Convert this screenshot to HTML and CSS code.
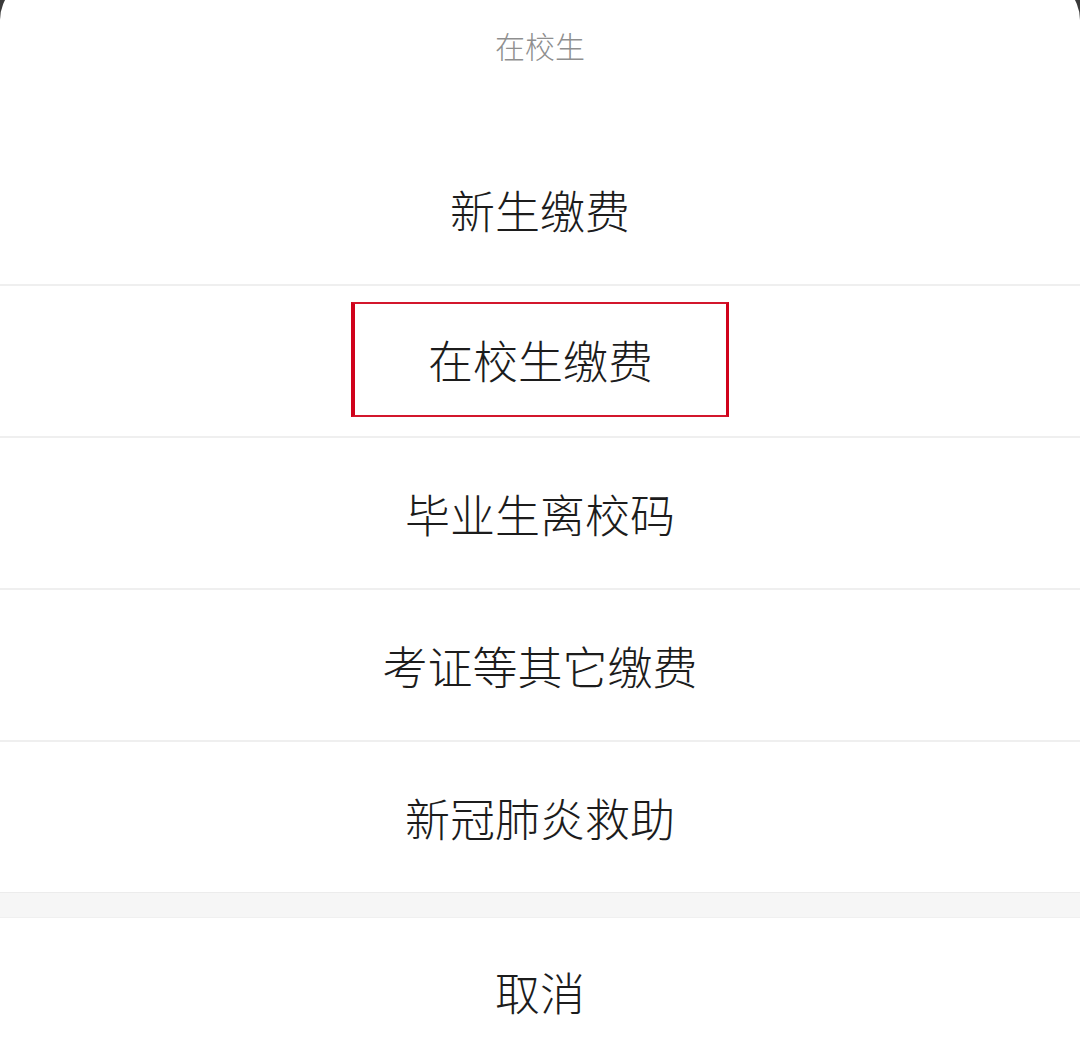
FILE: index.html
```html
<!DOCTYPE html>
<html lang="zh-CN">

<head>
    <meta charset="UTF-8">
    <meta name="viewport" content="width=device-width, initial-scale=1.0">
    <title>在校生</title>
    <link rel="stylesheet" href="styles.css">
</head>

<body>
    <div class="sheet">
        <div class="sheet-title">在校生</div>

        <ul class="action-list">
            <li class="action-item">新生缴费</li>
            <li class="action-item"><span class="marked">在校生缴费</span></li>
            <li class="action-item">毕业生离校码</li>
            <li class="action-item">考证等其它缴费</li>
            <li class="action-item">新冠肺炎救助</li>
        </ul>

        <div class="sheet-gap"></div>

        <div class="action-cancel">取消</div>
    </div>
</body>

</html>
```

FILE: styles.css
```css
* {
    box-sizing: border-box;
    margin: 0;
    padding: 0;
}

body {
    font-family: "Noto Sans CJK SC", "Noto Sans", sans-serif;
    font-weight: 300;
    background-color: #3a3a3a;
    height: 100vh;
    overflow: hidden;
}

.sheet {
    background-color: #ffffff;
    margin-top: -22px;
    border-radius: 42px 42px 0 0;
    min-height: 1100px;
}

.sheet-title {
    height: 156px;
    padding-top: 48px;
    text-align: center;
    font-size: 30px;
    line-height: 38px;
    color: #8f8f8f;
}

.action-list {
    list-style: none;
}

.action-item {
    height: 152px;
    display: flex;
    justify-content: center;
    align-items: center;
    font-size: 45px;
    color: #1c1c1c;
    border-bottom: 2px solid #efefef;
}

.action-item:last-child {
    border-bottom: none;
    height: 150px;
}

.marked {
    display: inline-block;
    padding: 0 73px;
    line-height: 111px;
    border-top: 2px solid #d3162c;
    border-bottom: 2px solid #d3162c;
    border-left: 4px solid #d0021b;
    border-right: 3px solid #d0021b;
    margin-bottom: 4px;
}

.sheet-gap {
    height: 26px;
    background-color: #f6f6f6;
    border-top: 1px solid #ececec;
    border-bottom: 1px solid #f0f0f0;
}

.action-cancel {
    height: 146px;
    display: flex;
    justify-content: center;
    align-items: center;
    font-size: 45px;
    color: #1c1c1c;
}
```
